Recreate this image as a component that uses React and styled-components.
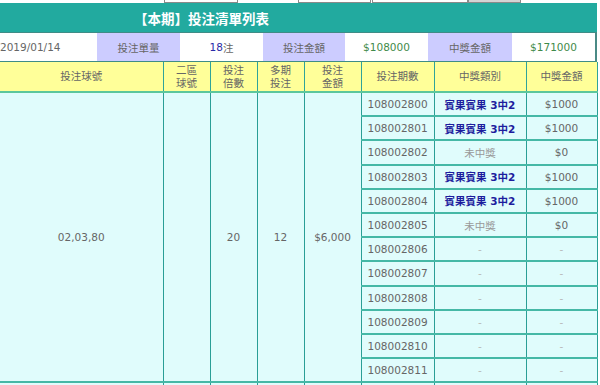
import React from "react";
import styled, { createGlobalStyle } from "styled-components";

const GlobalStyle = createGlobalStyle`
  html, body { margin: 0; padding: 0; background: #ffffff; }
  body {
    width: 600px; height: 385px; overflow: hidden;
    font-family: "DejaVu Sans", "Noto Sans CJK TC", sans-serif;
    font-size: 10.5px; color: #666666;
  }
`;

const Page = styled.div`
  width: 600px;
  display: flex;
  flex-direction: column;
`;

const TopStrip = styled.div`
  height: 3px;
  display: flex;
  background: #ffffff;
`;

const Stub = styled.div`
  margin-left: ${(p) => p.$ml}px;
  width: ${(p) => p.$w}px;
  height: 2px;
  border: 1px solid #8a8a8a;
  border-top: none;
  background: ${(p) => (p.$gray ? "#d4d4d4" : "#ffffff")};
`;

const TitleBar = styled.div`
  width: 597px;
  height: 29px;
  background: #22aa9f;
  display: flex;
  align-items: center;
  padding-left: 134px;
  box-sizing: border-box;
  color: #ffffff;
  font-family: "Noto Sans CJK TC", sans-serif;
  font-weight: 700;
  font-size: 13.5px;
`;

const InfoRow = styled.div`
  width: 597px;
  box-sizing: border-box;
  display: grid;
  grid-template-columns: 97px 83px 83px 82px 83px 84px 83px;
  height: 30px;
  border-top: 1px solid #3f8c86;
  border-bottom: 1px solid #3f8c86;
  border-right: 2px solid #4a8a86;
`;

const InfoCell = styled.div`
  display: flex;
  align-items: center;
  justify-content: ${(p) => (p.$left ? "flex-start" : "center")};
  background: ${(p) => (p.$label ? "#ccccff" : "#ffffff")};
  color: ${(p) => (p.$money ? "#3f8a4a" : "#666666")};
`;

const Blue = styled.span`
  color: #2a2aa8;
`;

const Table = styled.table`
  border-collapse: collapse;
  table-layout: fixed;
  width: 597px;
`;

const Col = styled.col`
  width: ${(p) => p.$w}px;
`;

const HeadCell = styled.th`
  background: #ffff99;
  font-weight: 400;
  color: #666666;
  height: 29px;
  padding: 0;
  line-height: 13px;
  text-align: center;
  border-left: 1px solid #2fa39a;
  border-right: 1px solid #2fa39a;
  border-bottom: 2px solid #5cc79c;
  &:first-child { border-left: none; }
`;

const Cell = styled.td`
  background: #e0fcfc;
  height: 22.2px;
  padding: 0;
  text-align: center;
  vertical-align: middle;
  color: ${(p) => (p.$tone === "win" ? "#1d1d9e" : p.$tone === "none" ? "#999999" : p.$tone === "dash" ? "#b8b8b8" : "#666666")};
  font-weight: ${(p) => (p.$tone === "win" ? 700 : 400)};
  border-left: 1px solid #2a9e96;
  border-right: 1px solid #2a9e96;
  border-bottom: 2px solid #45b8a6;
  &:first-child { border-left: none; }
`;

const PeriodCell = styled(Cell)`
  text-align: left;
  padding-left: 6px;
`;

const cols = [163, 47, 47, 47, 57, 73, 92, 71];

const rows = [
  { p: "108002800", t: "win", m: "$1000" },
  { p: "108002801", t: "win", m: "$1000" },
  { p: "108002802", t: "none", m: "$0" },
  { p: "108002803", t: "win", m: "$1000" },
  { p: "108002804", t: "win", m: "$1000" },
  { p: "108002805", t: "none", m: "$0" },
  { p: "108002806", t: "dash", m: "-" },
  { p: "108002807", t: "dash", m: "-" },
  { p: "108002808", t: "dash", m: "-" },
  { p: "108002809", t: "dash", m: "-" },
  { p: "108002810", t: "dash", m: "-" },
  { p: "108002811", t: "dash", m: "-" },
];

const typeText = (t) => (t === "win" ? "賓果賓果 3中2" : t === "none" ? "未中獎" : "-");

export default function App() {
  return (
    <Page>
      <GlobalStyle />
      <TopStrip>
        <Stub $ml={164} $w={72} />
        <Stub $ml={60} $w={71} />
        <Stub $ml={1} $w={94} />
        <Stub $ml={0} $w={51} $gray />
      </TopStrip>
      <TitleBar>【本期】投注清單列表</TitleBar>
      <InfoRow>
        <InfoCell $left>2019/01/14</InfoCell>
        <InfoCell $label>投注單量</InfoCell>
        <InfoCell>
          <Blue>18</Blue>注
        </InfoCell>
        <InfoCell $label>投注金額</InfoCell>
        <InfoCell $money>$108000</InfoCell>
        <InfoCell $label>中獎金額</InfoCell>
        <InfoCell $money>$171000</InfoCell>
      </InfoRow>
      <Table>
        <colgroup>
          {cols.map((w, i) => (
            <Col key={i} $w={w} />
          ))}
        </colgroup>
        <thead>
          <tr>
            <HeadCell>投注球號</HeadCell>
            <HeadCell>二區<br />球號</HeadCell>
            <HeadCell>投注<br />倍數</HeadCell>
            <HeadCell>多期<br />投注</HeadCell>
            <HeadCell>投注<br />金額</HeadCell>
            <HeadCell>投注期數</HeadCell>
            <HeadCell>中獎類別</HeadCell>
            <HeadCell>中獎金額</HeadCell>
          </tr>
        </thead>
        <tbody>
          {rows.map((r, i) => (
            <tr key={r.p}>
              {i === 0 && (
                <>
                  <Cell rowSpan={12}>02,03,80</Cell>
                  <Cell rowSpan={12}></Cell>
                  <Cell rowSpan={12}>20</Cell>
                  <Cell rowSpan={12}>12</Cell>
                  <Cell rowSpan={12}>$6,000</Cell>
                </>
              )}
              <PeriodCell>{r.p}</PeriodCell>
              <Cell $tone={r.t}>{typeText(r.t)}</Cell>
              <Cell $tone={r.t === "dash" ? "dash" : undefined}>{r.m}</Cell>
            </tr>
          ))}
          <tr>
            {cols.map((_, i) => (
              <Cell key={i}></Cell>
            ))}
          </tr>
        </tbody>
      </Table>
    </Page>
  );
}
